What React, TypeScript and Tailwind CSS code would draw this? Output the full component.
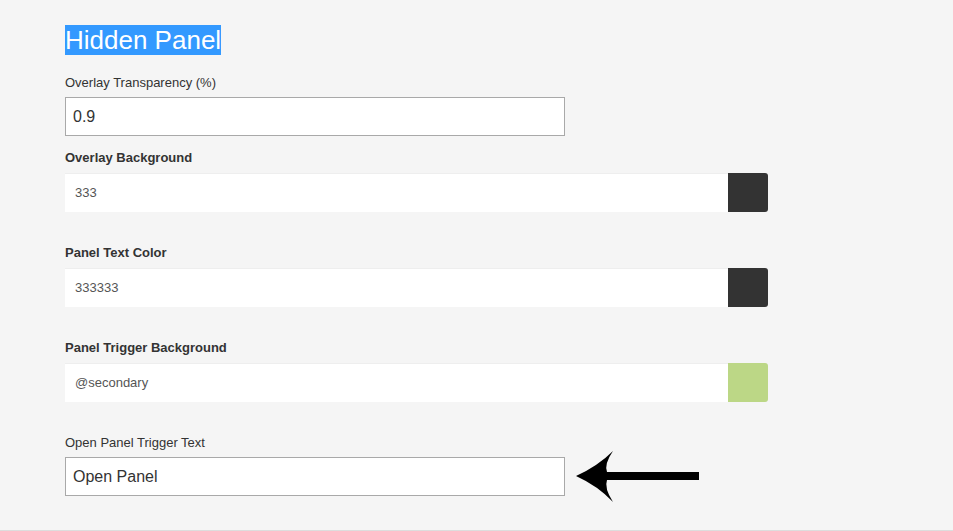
import React from "react"

function ColorField({ label, value, swatch }: { label: string; value: string; swatch: string }) {
  return (
    <div className="flex flex-col">
      <label className="text-[13px] leading-[18px] font-bold text-[#333]">{label}</label>
      <div className="mt-[6px] flex w-[703px] h-[39px]">
        <div className="flex-1 bg-white border-t border-[#eeeeee] flex items-center pl-[10px] text-[13px] text-[#555]">
          {value}
        </div>
        <div className={`w-[40px] h-full rounded-r-[3px] ${swatch}`}></div>
      </div>
    </div>
  )
}

export default function App() {
  return (
    <div
      className="w-[953px] h-[531px] bg-[#f5f5f5] border-b border-[#dddddd] overflow-hidden"
      style={{ fontFamily: '"Liberation Sans", Arial, sans-serif' }}
    >
      <div className="pl-[65px] pt-[26px] flex flex-col">
        <h1 className="text-[26px] leading-[29px] h-[29px]">
          <span className="bg-[#3399ff] text-white">Hidden Panel</span>
        </h1>

        <div className="mt-[19px] flex flex-col">
          <label className="text-[13px] leading-[18px] text-[#333]">Overlay Transparency (%)</label>
          <div className="mt-[5px] w-[500px] h-[39px] bg-white border border-[#a9a9a9] flex items-center pl-[7px] text-[16px] text-[#333]">
            0.9
          </div>
        </div>

        <div className="mt-[13px] flex flex-col gap-[32px]">
          <ColorField label="Overlay Background" value="333" swatch="bg-[#333333]" />
          <ColorField label="Panel Text Color" value="333333" swatch="bg-[#333333]" />
          <ColorField label="Panel Trigger Background" value="@secondary" swatch="bg-[#bcd786]" />
        </div>

        <div className="mt-[32px] flex flex-col">
          <label className="text-[13px] leading-[18px] text-[#333]">Open Panel Trigger Text</label>
          <div className="mt-[5px] flex items-center h-[39px]">
            <div className="w-[500px] h-[39px] shrink-0 bg-white border border-[#a9a9a9] flex items-center pl-[7px] text-[16px] text-[#333]">
              Open Panel
            </div>
            <svg className="ml-[11px] shrink-0" width="124" height="54" viewBox="0 0 124 54">
              <path d="M0 26 Q22 16 37 1 Q28 14 31 22 L123 22 L123 30 L31 30 Q28 38 37 52 Q22 36 0 26 Z" fill="#000" />
            </svg>
          </div>
        </div>
      </div>
    </div>
  )
}
